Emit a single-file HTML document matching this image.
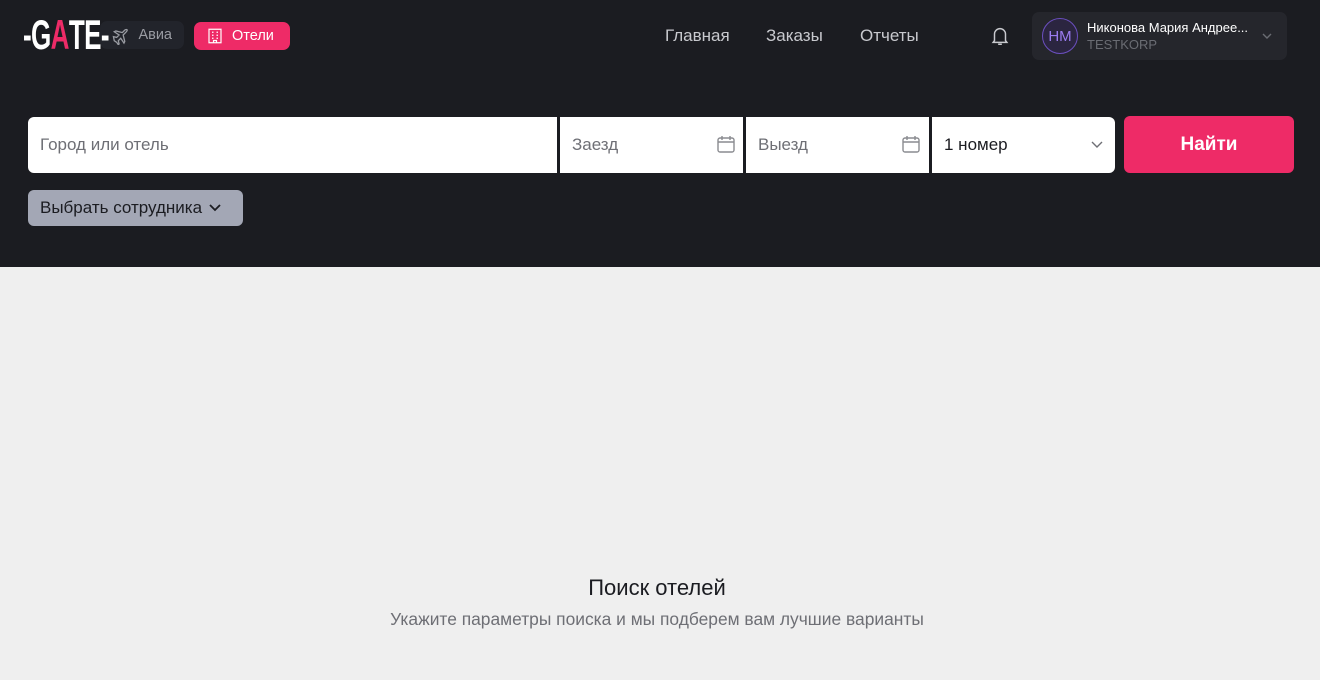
<!DOCTYPE html>
<html><head><meta charset="utf-8"><style>
*{box-sizing:border-box;margin:0;padding:0}
body{width:1320px;height:680px;background:#efefef;font-family:"Liberation Sans","DejaVu Sans",sans-serif;position:relative;overflow:hidden}
.top{position:absolute;left:0;top:0;width:1320px;height:267px;background:#1b1c21}
.abs{position:absolute}
.logo{left:23px;top:12px;font-weight:bold;font-size:42px;color:#fff;letter-spacing:-1px;transform:scaleX(0.62);transform-origin:left;line-height:46px;white-space:nowrap}
.logo b{color:#ee2b67}
.pill{height:28px;border-radius:7px;font-size:14.5px;display:flex;align-items:center;gap:8px;padding:0 12px}
.nav{color:#c8c9ce;font-size:17px;top:26px}
.field{background:#fff;height:56px;top:117px;font-size:17px;color:#6e6f75;display:flex;align-items:center;padding-left:12px}
</style></head><body>
<div class="top"></div>
<div class="abs pill" style="left:100px;top:21px;background:#22242b;color:#9a9ca3;padding-left:11px;width:84px">
<svg width="20" height="20" viewBox="0 0 24 24" fill="none" stroke="#9a9ca3" stroke-width="1.6"><path d="M3 14l4 1 3-3-6-4 2-1 8 2 3-3c1-1 3-1 3 0s-1 2-2 3l-3 3 2 8-1 2-4-6-3 3 1 4-1 1-2-3-3-2z"/></svg>Авиа</div>
<div class="abs logo">-G<b>A</b>TE-</div>
<div class="abs pill" style="left:194px;top:22px;background:#ee2b67;color:#fff;width:96px">
<svg width="18" height="18" viewBox="0 0 24 24" fill="none" stroke="#fff" stroke-width="1.6"><rect x="4" y="3" width="16" height="18"/><path d="M8 7h2M14 7h2M8 11h2M14 11h2M8 15h2M14 15h2M10 21v-3h4v3"/></svg>Отели</div>
<div class="abs nav" style="left:665px">Главная</div>
<div class="abs nav" style="left:766px">Заказы</div>
<div class="abs nav" style="left:860px">Отчеты</div>
<svg class="abs" style="left:989px;top:25px" width="22" height="22" viewBox="0 0 24 24" fill="none" stroke="#c8c9ce" stroke-width="1.6"><path d="M6 17V10a6 6 0 0112 0v7l1.5 2h-15zM10 21h4"/></svg>
<div class="abs" style="left:1032px;top:12px;width:255px;height:48px;background:#25262c;border-radius:7px"></div>
<div class="abs" style="left:1042px;top:18px;width:36px;height:36px;border-radius:50%;background:#2b2540;border:1px solid #6b4fbf;color:#9b7cf0;font-size:15px;display:flex;align-items:center;justify-content:center">НМ</div>
<div class="abs" style="left:1087px;top:20px;color:#fff;font-size:13px">Никонова Мария Андрее...</div>
<div class="abs" style="left:1087px;top:37px;color:#6a6c73;font-size:13px">TESTKORP</div>
<svg class="abs" style="left:1261px;top:31px" width="12" height="10" viewBox="0 0 12 10" fill="none" stroke="#6a6c73" stroke-width="1.4"><path d="M2 3l4 4 4-4"/></svg>
<div class="abs field" style="left:28px;width:529px;border-radius:6px 0 0 6px">Город или отель</div>
<div class="abs field" style="left:560px;width:183px">Заезд</div>
<div class="abs field" style="left:746px;width:183px">Выезд</div>
<div class="abs field" style="left:932px;width:183px;color:#1b1c21;border-radius:0 6px 6px 0">1 номер</div>
<svg class="abs" style="left:716px;top:134px" width="20" height="20" viewBox="0 0 20 20" fill="none" stroke="#8a8b90" stroke-width="1.4"><rect x="2" y="4" width="16" height="14" rx="2"/><path d="M2 8h16M6 2v4M14 2v4"/></svg>
<svg class="abs" style="left:901px;top:134px" width="20" height="20" viewBox="0 0 20 20" fill="none" stroke="#8a8b90" stroke-width="1.4"><rect x="2" y="4" width="16" height="14" rx="2"/><path d="M2 8h16M6 2v4M14 2v4"/></svg>
<svg class="abs" style="left:1090px;top:140px" width="14" height="10" viewBox="0 0 14 10" fill="none" stroke="#6e6f75" stroke-width="1.4"><path d="M2 2l5 5 5-5"/></svg>
<div class="abs" style="left:1124px;top:116px;width:170px;height:57px;background:#ee2b67;border-radius:6px;color:#fff;font-size:19px;font-weight:bold;display:flex;align-items:center;justify-content:center">Найти</div>
<div class="abs" style="left:28px;top:190px;width:215px;height:36px;background:#a3a7b5;border-radius:6px;color:#1b1c21;font-size:17px;display:flex;align-items:center;padding-left:12px;gap:6px">Выбрать сотрудника<svg width="14" height="10" viewBox="0 0 14 10" fill="none" stroke="#1b1c21" stroke-width="1.8"><path d="M2 2l5 5 5-5"/></svg></div>
<div class="abs" style="left:0;width:1314px;top:575px;text-align:center;font-size:22px;color:#1b1c21">Поиск отелей</div>
<div class="abs" style="left:0;width:1314px;top:609px;text-align:center;font-size:17.4px;color:#6e6f75">Укажите параметры поиска и мы подберем вам лучшие варианты</div>
</body></html>
